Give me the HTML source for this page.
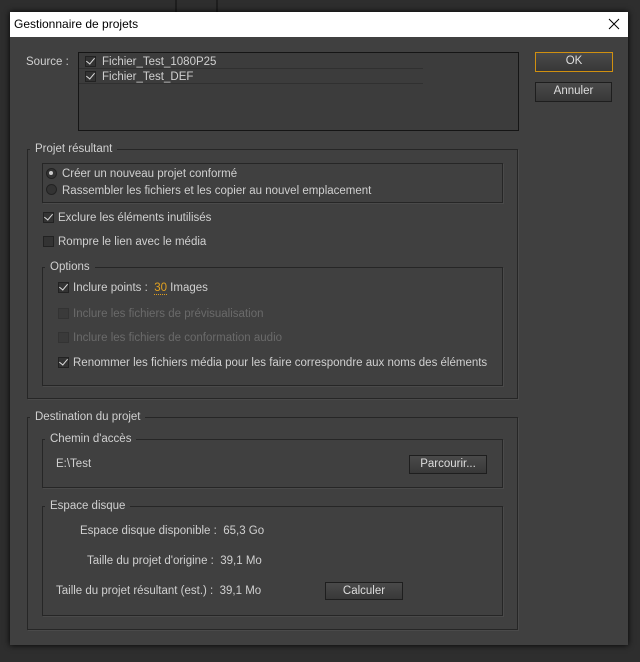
<!DOCTYPE html><html><head><style>
body{margin:0;width:640px;height:662px;background:#2e2e2e;position:relative;overflow:hidden;font-family:"Liberation Sans",sans-serif;font-size:11.5px;color:#d0d0d0}
.a{position:absolute}
.dlg{left:10px;top:12px;width:618px;height:633px;background:#404040;box-shadow:0 0 6px #000}
.title{left:10px;top:12px;width:618px;height:25px;background:#fff;color:#000;font-size:12px}
.g{border:1px solid #262626;box-shadow:1px 1px 0 #4a4a4a}
.lg{background:#404040;padding:0 5px;line-height:13px}
.btn{border:1px solid #1e1e1e;background:linear-gradient(#4a4a4a,#383838);text-align:center;line-height:17px;color:#ddd;box-sizing:border-box}
.cb{width:11px;height:11px;border:1px solid #222;background:#333;box-sizing:border-box}
.ck::after{content:"";position:absolute;left:2px;top:-1px;width:4px;height:7px;border:solid #ddd;border-width:0 1.5px 1.5px 0;transform:rotate(40deg)}
.rd{width:11px;height:11px;border-radius:50%;border:1px solid #222;background:#333;box-sizing:border-box}
.dis{color:#6a6a6a}
.t{line-height:13px;white-space:nowrap;margin-top:1px}
</style></head><body>
<div class="a" style="left:175px;top:0;width:2px;height:12px;background:#1e1e1e"></div>
<div class="a" style="left:216px;top:0;width:2px;height:12px;background:#1e1e1e"></div>
<div class="a dlg"></div>
<div class="a title"><span class="a" style="left:4px;top:5px">Gestionnaire de projets</span>
<svg class="a" style="left:598px;top:6px" width="12" height="12"><path d="M1 1L11 11M11 1L1 11" stroke="#000" stroke-width="1"/></svg></div>

<div class="a t" style="left:26px;top:55px">Source :</div>
<div class="a" style="left:78px;top:52px;width:439px;height:77px;border:1px solid #151515;background:#3c3c3c"></div>
<div class="a" style="left:79px;top:68px;width:344px;height:1px;background:#303030"></div>
<div class="a" style="left:79px;top:83px;width:344px;height:1px;background:#303030"></div>
<div class="a cb ck" style="left:85px;top:56px"></div><div class="a t" style="left:102px;top:55px">Fichier_Test_1080P25</div>
<div class="a cb ck" style="left:85px;top:71px"></div><div class="a t" style="left:102px;top:70px">Fichier_Test_DEF</div>
<div class="a btn" style="left:535px;top:52px;width:78px;height:20px;border:1px solid #d09010">OK</div>
<div class="a btn" style="left:535px;top:82px;width:77px;height:20px">Annuler</div>

<div class="a g" style="left:27px;top:149px;width:489px;height:248px"></div>
<div class="a lg" style="left:30px;top:143px">Projet résultant</div>
<div class="a g" style="left:42px;top:163px;width:459px;height:38px"></div>
<div class="a rd" style="left:46px;top:168px"></div><div class="a" style="left:49px;top:171px;width:4px;height:4px;border-radius:50%;background:#ccc"></div>
<div class="a t" style="left:62px;top:167px">Créer un nouveau projet conformé</div>
<div class="a rd" style="left:46px;top:184px"></div>
<div class="a t" style="left:62px;top:184px">Rassembler les fichiers et les copier au nouvel emplacement</div>
<div class="a cb ck" style="left:43px;top:212px"></div><div class="a t" style="left:58px;top:211px">Exclure les éléments inutilisés</div>
<div class="a cb" style="left:43px;top:236px"></div><div class="a t" style="left:58px;top:235px">Rompre le lien avec le média</div>
<div class="a g" style="left:42px;top:267px;width:459px;height:117px"></div>
<div class="a lg" style="left:45px;top:261px">Options</div>
<div class="a cb ck" style="left:58px;top:282px"></div><div class="a t" style="left:73px;top:281px">Inclure points : &nbsp;<span style="color:#e0a020;border-bottom:1px dotted #e0a020">30</span> Images</div>
<div class="a cb" style="left:58px;top:308px;border-color:#333;background:#3a3a3a"></div><div class="a t dis" style="left:73px;top:307px">Inclure les fichiers de prévisualisation</div>
<div class="a cb" style="left:58px;top:332px;border-color:#333;background:#3a3a3a"></div><div class="a t dis" style="left:73px;top:331px">Inclure les fichiers de conformation audio</div>
<div class="a cb ck" style="left:58px;top:357px"></div><div class="a t" style="left:73px;top:356px">Renommer les fichiers média pour les faire correspondre aux noms des éléments</div>

<div class="a g" style="left:27px;top:417px;width:489px;height:211px"></div>
<div class="a lg" style="left:30px;top:411px">Destination du projet</div>
<div class="a g" style="left:42px;top:439px;width:459px;height:47px"></div>
<div class="a lg" style="left:45px;top:433px">Chemin d'accès</div>
<div class="a t" style="left:56px;top:457px">E:\Test</div>
<div class="a btn" style="left:409px;top:455px;width:78px;height:19px">Parcourir...</div>
<div class="a g" style="left:42px;top:506px;width:459px;height:108px"></div>
<div class="a lg" style="left:45px;top:500px">Espace disque</div>
<div class="a t" style="left:80px;top:524px">Espace disque disponible : &nbsp;65,3 Go</div>
<div class="a t" style="left:87px;top:554px">Taille du projet d'origine : &nbsp;39,1 Mo</div>
<div class="a t" style="left:56px;top:584px">Taille du projet résultant (est.) : &nbsp;39,1 Mo</div>
<div class="a btn" style="left:325px;top:582px;width:78px;height:18px">Calculer</div>
</body></html>
